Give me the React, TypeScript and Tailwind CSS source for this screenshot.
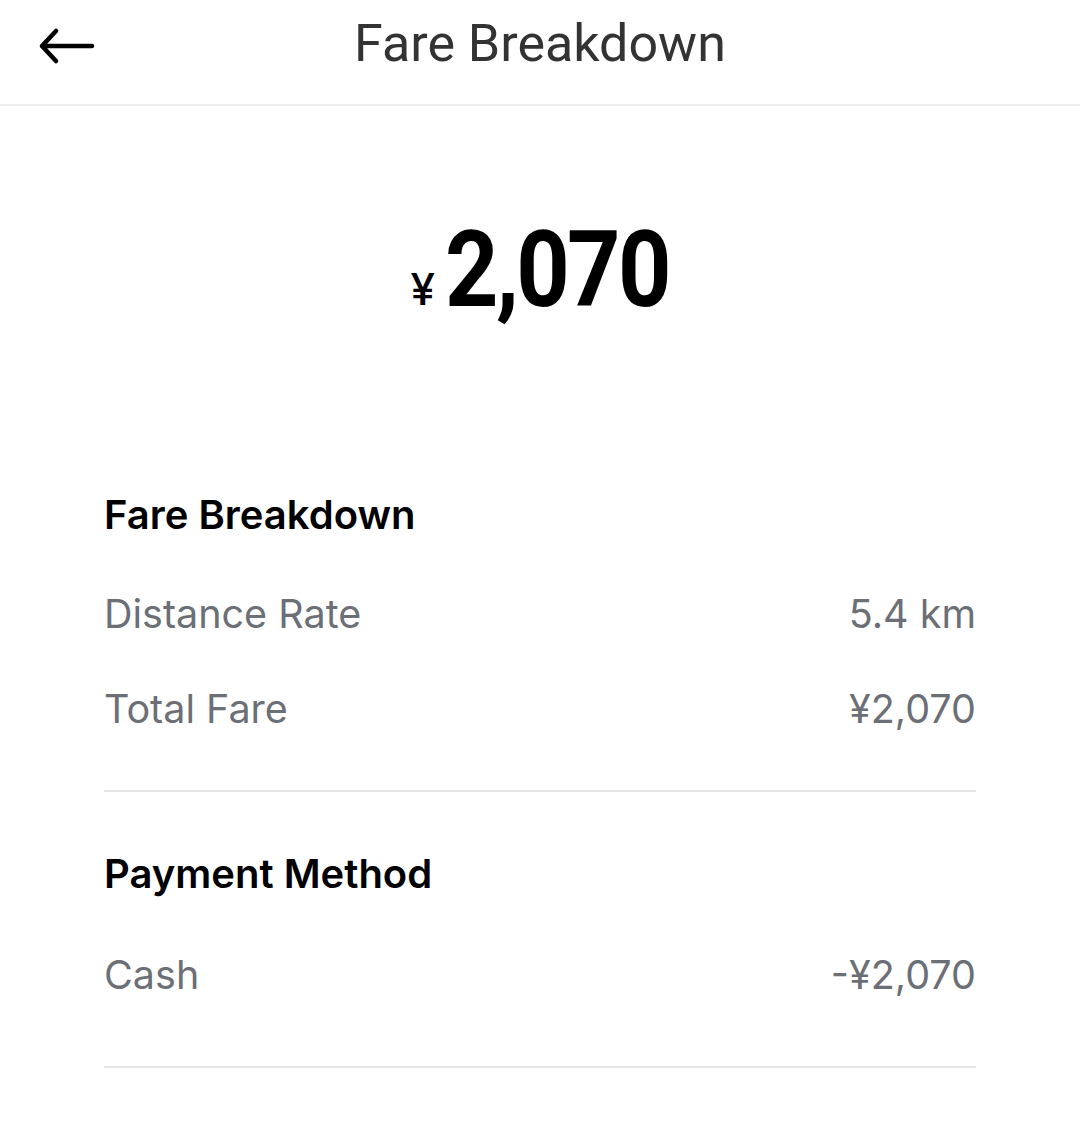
const fareRows = [
  { label: "Distance Rate", value: "5.4 km" },
  { label: "Total Fare", value: "¥2,070" },
];

const paymentRows = [{ label: "Cash", value: "-¥2,070" }];

const Row = ({ label, value }: { label: string; value: string }) => (
  <div className="flex items-center justify-between h-[95px] text-[39.5px] text-[#6c6f76]">
    <span>{label}</span>
    <span>{value}</span>
  </div>
);

const BackArrow = () => (
  <svg width="60" height="40" viewBox="0 0 60 40" fill="none">
    <path
      d="M6 20H56M6 20L20 5M6 20L20 35"
      stroke="black"
      strokeWidth="4.5"
      strokeLinecap="round"
      strokeLinejoin="round"
    />
  </svg>
);

export default function App() {
  return (
    <div
      className="w-[1080px] h-[1145px] bg-white text-black"
      style={{ fontFamily: "Inter, 'Noto Sans', sans-serif" }}
    >
      {/* Header */}
      <div className="relative flex items-center justify-center h-[106px] border-b-2 border-[#ededed]">
        <button className="absolute left-[36px] top-[26px]">
          <BackArrow />
        </button>
        <h1 className="text-[52px] text-[#333] pb-[16px]" style={{ fontFamily: "Roboto, sans-serif" }}>
          Fare Breakdown
        </h1>
      </div>

      {/* Amount */}
      <div className="flex items-end justify-center h-[217px] pl-[30px]">
        <span className="text-[44px] mr-[10px] mb-[1px] font-medium">¥</span>
        <span
          className="text-[106px] font-bold leading-none tracking-[-3px] scale-x-[0.88] origin-left"
          style={{ fontFamily: "Roboto, sans-serif" }}
        >
          2,070
        </span>
      </div>

      {/* Breakdown */}
      <div className="px-[104px] pt-[158px]">
        <h2 className="text-[40px] font-semibold h-[68px] flex items-center">Fare Breakdown</h2>
        <div className="mt-[18px]">
          {fareRows.map((row) => (
            <Row key={row.label} {...row} />
          ))}
        </div>
        <div className="mt-[33px] border-b-2 border-[#e6e6e6]" />

        <h2 className="text-[40px] font-semibold mt-[48px] h-[68px] flex items-center">Payment Method</h2>
        <div className="mt-[20px]">
          {paymentRows.map((row) => (
            <Row key={row.label} {...row} />
          ))}
        </div>
        <div className="mt-[43px] border-b-2 border-[#e6e6e6]" />
      </div>
    </div>
  );
}
